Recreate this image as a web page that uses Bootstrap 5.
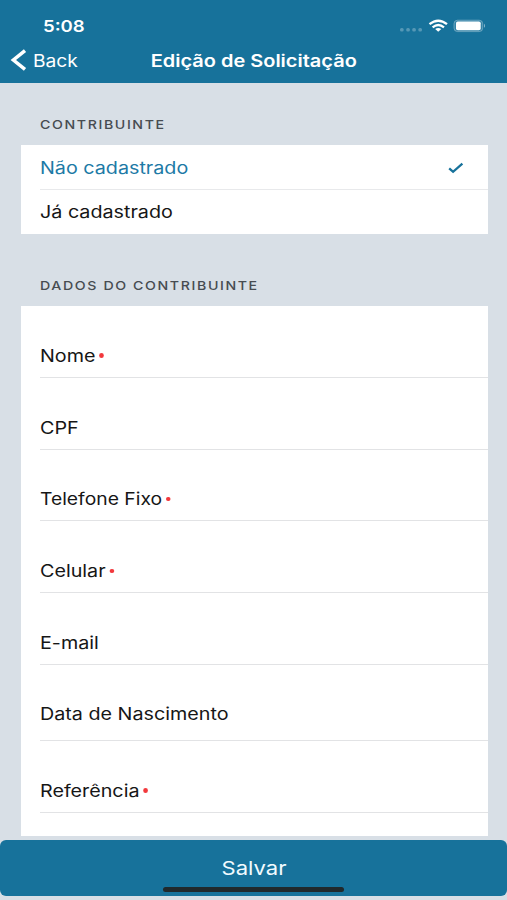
<!DOCTYPE html>
<html lang="pt-BR">
<head>
<meta charset="utf-8">
<meta name="viewport" content="width=device-width, initial-scale=1">
<title>Edição de Solicitação</title>
<link href="https://cdn.jsdelivr.net/npm/bootstrap@5.3.0/dist/css/bootstrap.min.css" rel="stylesheet">
<style>
  :root { --brand: #17729b; --canvas: #d8dfe6; }
  body { font-family: Inter, "Liberation Sans", sans-serif; background: var(--canvas); color: #161616; font-size: 17px; line-height: 24px; }
  .screen { height: 900px; }
  .topbar { background: var(--brand); height: 83px; }
  .status { height: 37px; padding: 14px 22px 0 42.5px; }
  .titles { height: 46px; padding: 0 10px; }
  .side { width: 135px; }
  /* wide lettering */
  .wide { display: inline-block; white-space: nowrap; transform: scaleX(1.16); transform-origin: 0 50%; }
  .mid { transform-origin: 50% 50%; }
  .clock { font-size: 16px; font-weight: 600; }
  .title { font-size: 17px; line-height: 24px; font-weight: 600; padding-top: 2px; transform: scaleX(1.175); }
  .back { padding-top: 2px; transform: scaleX(1.13); }
  .panel-label { font-size: 12px; line-height: 16px; font-weight: 500; letter-spacing: 1.35px; color: #474c51; padding: 34px 0 12px 40px; }
  .panel-label .wide { transform: scaleX(1.182); }
  .panel-label.second { padding-top: 44px; }
  .panel { margin: 0 19.5px 0 20.5px; background: #fff; }
  .fields { height: 530px; }
  .choice { height: 44px; margin-left: 19.5px; padding: 1px 23.5px 0 0; }
  .choice + .choice { height: 45px; border-top: 1px solid #e8e9eb; padding-top: 0; }
  .chosen { color: #1d7aa6; }
  .field { height: 71.8px; margin-left: 19.5px; border-bottom: 1px solid #e2e3e5; padding-bottom: 9px; }
  .field.tall { height: 76px; padding-bottom: 13.5px; }
  .req::after { content: ""; display: inline-block; width: 4px; height: 4.5px; border-radius: 50%; background: #f2383c; margin-left: 3px; vertical-align: 4px; }
  .tight { transform: scaleX(1.135); }
  .save { height: 56px; background: var(--brand); border-radius: 6px; font-size: 19px; --bs-btn-border-width: 0; }
  .save, .save:hover { background: var(--brand); color: #f2fbff; }
  .save .wide { padding-top: 2px; }
  .home-bar { position: absolute; left: 163px; top: 51px; width: 181px; height: 5px; border-radius: 3px; background: #20292c; }
</style>
</head>
<body>
<div class="screen d-flex flex-column overflow-hidden">
  <header class="topbar text-white flex-shrink-0">
    <div class="status d-flex justify-content-between">
      <span class="wide clock">5:08</span>
      <svg width="90" height="24" viewBox="395 14 90 24" aria-hidden="true">
        <g fill="#fff" fill-opacity=".27"><rect x="400" y="28" width="3.7" height="3.6" rx="1.5"/><rect x="406.2" y="28" width="3.7" height="3.6" rx="1.5"/><rect x="412.2" y="28" width="3.7" height="3.6" rx="1.5"/><rect x="418.3" y="28" width="3.7" height="3.6" rx="1.5"/></g>
        <g fill="none" stroke="#fff" stroke-width="2.3"><path d="M429.5 24.2Q438.2 17.2 447 24.2"/><path d="M432.6 27.3Q438.2 22.8 444 27.3"/></g>
        <path d="M435.2 29Q438.2 26.8 441.3 29L438.2 31.8Z" fill="#fff"/>
        <rect x="454" y="20.2" width="28.7" height="11.4" rx="3.5" fill="#fff" fill-opacity=".12" stroke="#fff" stroke-opacity=".3" stroke-width="1"/>
        <rect x="456" y="21.5" width="24.7" height="8.8" rx="1.8" fill="#fff"/>
        <path d="M484 23.8Q486.8 25.8 484 27.8Z" fill="#fff" fill-opacity=".45"/>
      </svg>
    </div>
    <div class="titles d-flex align-items-center">
      <a href="#" class="side d-flex align-items-center text-white text-decoration-none">
        <svg width="23" height="24" viewBox="0 0 23 24" aria-hidden="true"><path d="M15 2.7 3.4 12l11.6 9.3" fill="none" stroke="#fff" stroke-width="3.5"/></svg>
        <span class="wide back">Back</span>
      </a>
      <h1 class="d-flex flex-fill justify-content-center m-0"><span class="wide mid title">Edição de Solicitação</span></h1>
      <div class="side"></div>
    </div>
  </header>
  <main class="flex-fill overflow-hidden">
    <h2 class="panel-label d-flex mb-0"><span class="wide">CONTRIBUINTE</span></h2>
    <div class="panel">
      <div class="choice chosen d-flex align-items-center justify-content-between">
        <span class="wide">Não cadastrado</span>
        <svg width="16" height="12" viewBox="0 0 16 12" aria-hidden="true"><path d="M1.2 6.3 5.1 9.8 14.4 1.7" fill="none" stroke="#17729b" stroke-width="2.3"/></svg>
      </div>
      <div class="choice d-flex align-items-center"><span class="wide">Já cadastrado</span></div>
    </div>
    <h2 class="panel-label second d-flex mb-0"><span class="wide">DADOS DO CONTRIBUINTE</span></h2>
    <div class="panel fields">
      <div class="field d-flex align-items-end"><span class="wide req">Nome</span></div>
      <div class="field d-flex align-items-end"><span class="wide">CPF</span></div>
      <div class="field d-flex align-items-end"><span class="wide req tight">Telefone Fixo</span></div>
      <div class="field d-flex align-items-end"><span class="wide req">Celular</span></div>
      <div class="field d-flex align-items-end"><span class="wide">E-mail</span></div>
      <div class="field tall d-flex align-items-end"><span class="wide">Data de Nascimento</span></div>
      <div class="field d-flex align-items-end"><span class="wide req">Referência</span></div>
    </div>
  </main>
  <footer class="flex-shrink-0 position-relative py-1">
    <button type="button" class="btn save w-100 d-flex align-items-center justify-content-center p-0"><span class="wide mid">Salvar</span></button>
    <div class="home-bar"></div>
  </footer>
</div>
<script src="https://cdn.jsdelivr.net/npm/bootstrap@5.3.0/dist/js/bootstrap.bundle.min.js"></script>
</body>
</html>
